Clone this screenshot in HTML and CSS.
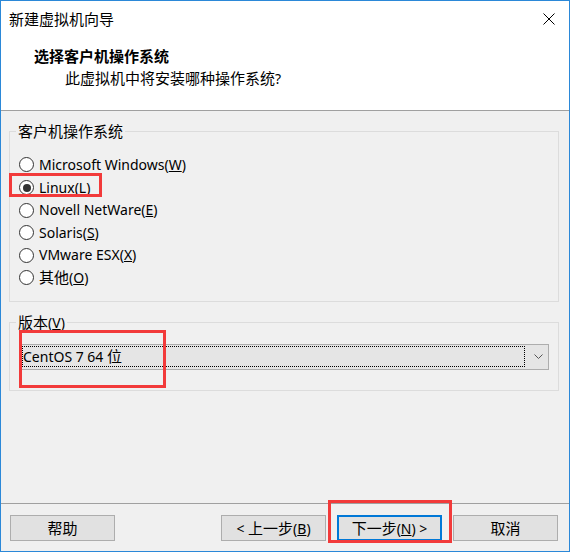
FILE: index.html
```html
<!DOCTYPE html>
<html lang="zh-CN">
<head>
<meta charset="utf-8">
<title>新建虚拟机向导</title>
<link rel="stylesheet" href="styles.css">
</head>
<body>
<div class="window">
  <div class="header">
    <div class="titlebar">
      <span class="title">新建虚拟机向导</span>
      <svg class="close" width="12" height="12" viewBox="0 0 12 12"><path d="M0.5 0.5 L11.5 11.5 M11.5 0.5 L0.5 11.5" stroke="#000" stroke-width="1" fill="none"/></svg>
    </div>
    <div class="heading">选择客户机操作系统</div>
    <div class="subheading">此虚拟机中将安装哪种操作系统<span class="lat">?</span></div>
  </div>
  <div class="content">
    <fieldset class="group os">
      <legend>客户机操作系统</legend>
      <div class="radios">
        <div class="radio-row"><span class="radio"></span><span class="label lat">Microsoft Windows(<u>W</u>)</span></div>
        <div class="radio-row"><span class="radio checked"></span><span class="label lat">Linux(<u>L</u>)</span></div>
        <div class="radio-row"><span class="radio"></span><span class="label lat">Novell NetWare(<u>E</u>)</span></div>
        <div class="radio-row"><span class="radio"></span><span class="label lat">Solaris(<u>S</u>)</span></div>
        <div class="radio-row"><span class="radio"></span><span class="label lat">VMware ESX(<u>X</u>)</span></div>
        <div class="radio-row"><span class="radio"></span><span class="label">其他<span class="lat">(<u>O</u>)</span></span></div>
      </div>
    </fieldset>
    <fieldset class="group version">
      <legend>版本<span class="lat">(<u>V</u>)</span></legend>
      <div class="combo">
        <div class="combo-value"><span class="lat">CentOS 7 64 </span>位</div>
        <svg class="chevron" width="9" height="5" viewBox="0 0 9 5"><path d="M0.5 0.5 L4.5 4.5 L8.5 0.5" stroke="#555" stroke-width="1" fill="none"/></svg>
      </div>
    </fieldset>
  </div>
  <div class="footer">
    <button class="btn">帮助</button>
    <div class="nav">
      <button class="btn"><span class="lat">&lt; </span>上一步<span class="lat">(<u>B</u>)</span></button>
      <button class="btn default">下一步<span class="lat">(<u>N</u>) &gt;</span></button>
      <button class="btn">取消</button>
    </div>
  </div>
  <div class="mark mark-linux"></div>
  <div class="mark mark-combo"></div>
  <div class="mark mark-next"></div>
</div>
</body>
</html>
```
FILE: styles.css
```css
* { box-sizing: border-box; }
html, body { margin: 0; padding: 0; }
body {
  font-family: "Noto Sans", "Noto Sans CJK SC", sans-serif;
  font-size: 15px;
  color: #000;
  background: #f0f0f0;
}
.lat { font-size: 14px; }
.window {
  position: relative;
  width: 570px;
  height: 552px;
  border: 1px solid #2b88d8;
  background: #f0f0f0;
  display: flex;
  flex-direction: column;
}
.header {
  height: 110px;
  background: #fff;
  border-bottom: 1px solid #a0a0a0;
}
.titlebar {
  height: 36px;
  display: flex;
  align-items: center;
  justify-content: space-between;
  padding: 0 14px 0 8px;
}
.title { line-height: 20px; }
.close { display: block; margin-top: -1px; }
.heading {
  margin-top: 9px;
  padding-left: 33px;
  line-height: 20px;
  font-weight: bold;
}
.subheading {
  margin-top: 2px;
  padding-left: 64px;
  line-height: 20px;
}
.content {
  padding: 0 10px 0 8px;
}
.group {
  margin: 10px 0 0 0;
  padding: 0;
  border: 1px solid #dcdcdc;
  min-width: 0;
}
.group legend {
  margin-left: 6px;
  padding: 0 2px;
  line-height: 20px;
}
.radios {
  margin: 12.7px 0 11.7px 9px;
}
.radio-row {
  height: 22.6px;
  display: flex;
  align-items: center;
}
.radio {
  width: 15px;
  height: 15px;
  border: 1px solid #333;
  border-radius: 50%;
  background: #fff;
  display: flex;
  align-items: center;
  justify-content: center;
  flex: none;
}
.radio.checked::after {
  content: "";
  width: 8px;
  height: 8px;
  border-radius: 50%;
  background: #333;
}
.label {
  margin-left: 5px;
  line-height: 20px;
}
.combo {
  margin: 11px 9px 20px 10px;
  height: 26px;
  border: 1px solid #adadad;
  background: #e5e5e5;
  display: flex;
  align-items: center;
}
.combo-value {
  margin-left: 1px;
  width: 503px;
  height: 21px;
  border: 1px dotted #000;
  line-height: 19px;
  padding-left: 0;
}
.chevron {
  display: block;
  margin-left: 9px;
}
.footer {
  margin-top: auto;
  border-top: 1px solid #a0a0a0;
  padding: 11px 11px 10px 9px;
  display: flex;
  justify-content: space-between;
}
.nav {
  display: flex;
  gap: 11px;
}
.btn {
  width: 105px;
  height: 26px;
  border: 1px solid #adadad;
  background: #e1e1e1;
  font-family: inherit;
  font-size: 15px;
  color: #000;
  padding: 0;
  line-height: 20px;
}
.btn.default {
  border: 2px solid #0078d7;
}
.mark {
  position: absolute;
  border: 3px solid #f23a3a;
}
.mark-linux { left: 8px; top: 172px; width: 93px; height: 24px; }
.mark-combo { left: 18px; top: 329px; width: 147px; height: 58px; }
.mark-next { left: 327px; top: 499px; width: 124px; height: 43px; }
```
